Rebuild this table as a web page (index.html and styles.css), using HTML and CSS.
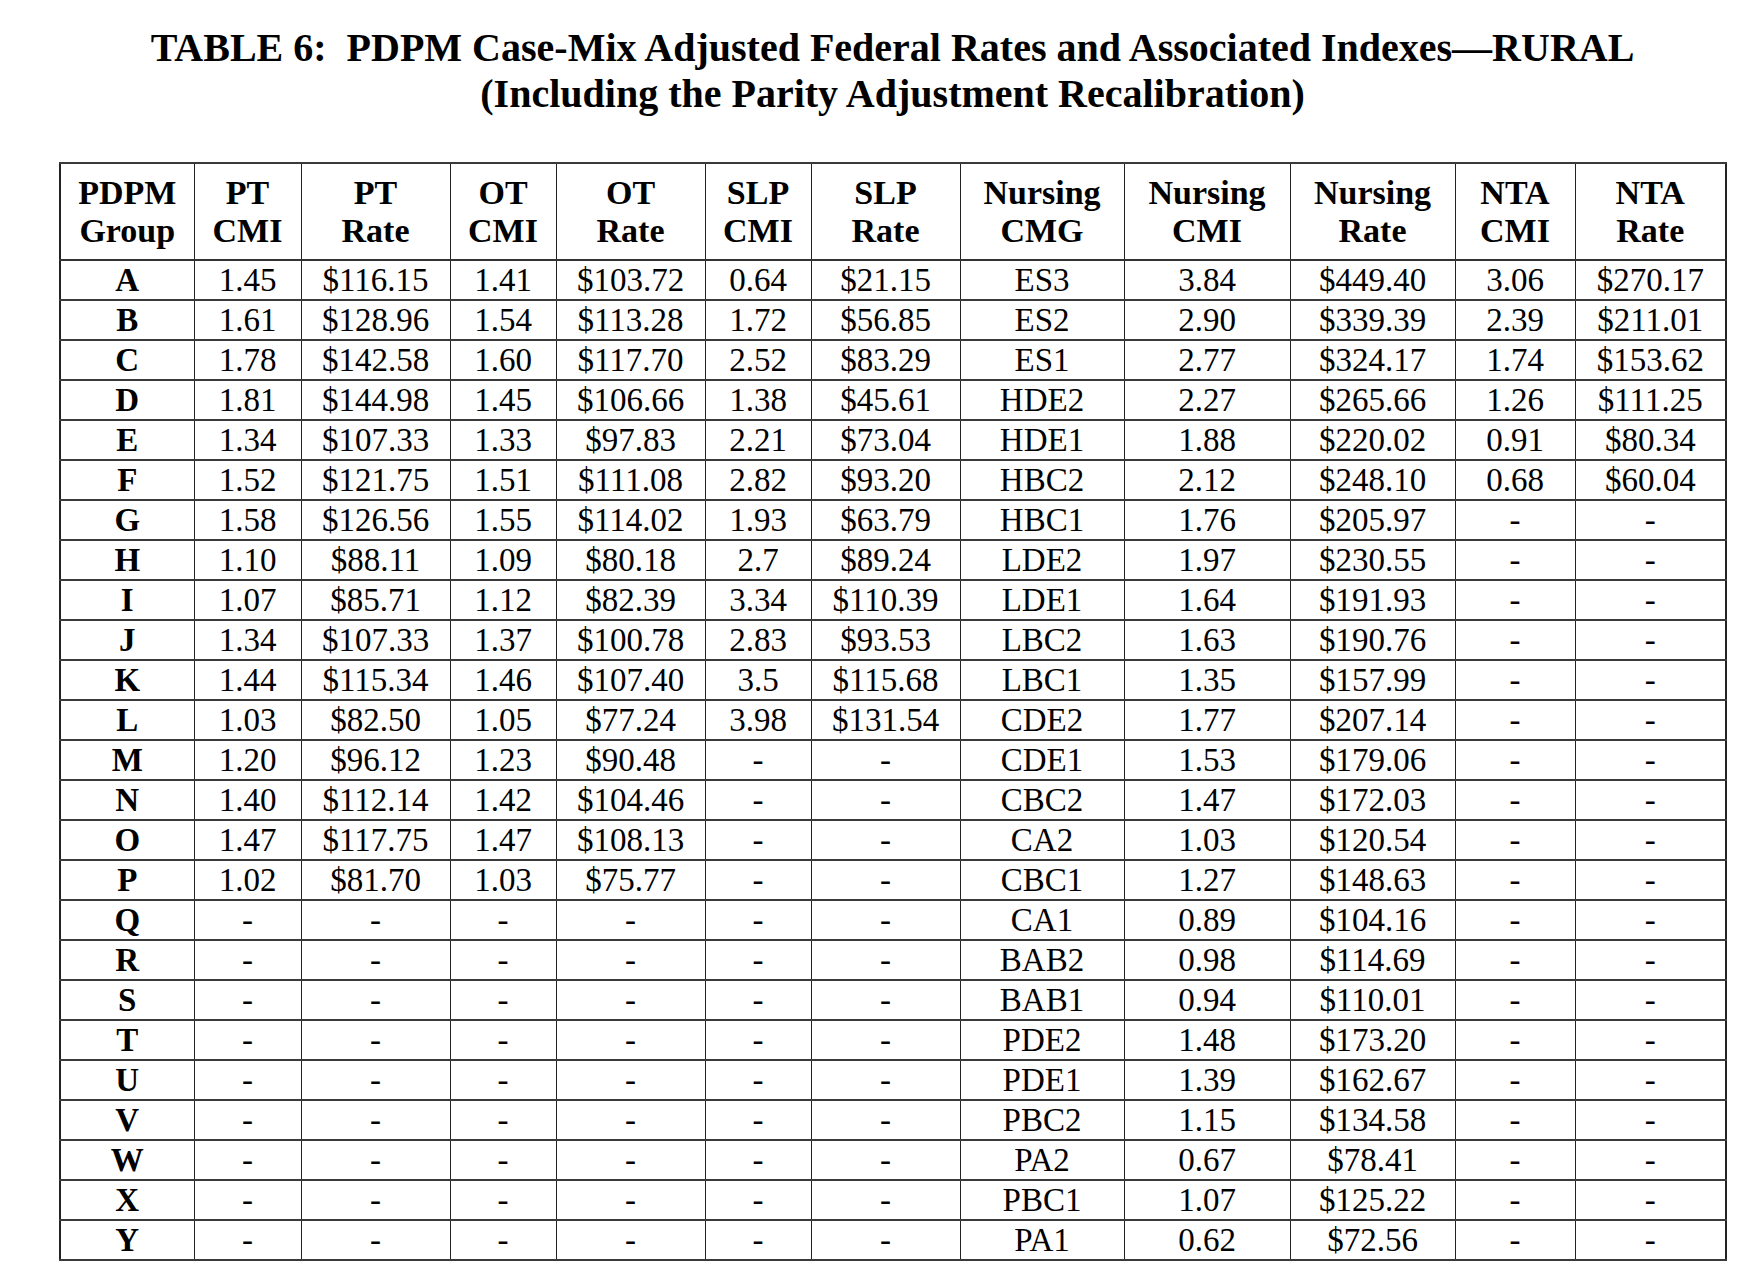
FILE: index.html
```html
<!DOCTYPE html>
<html>
<head>
<meta charset="utf-8">
<link rel="stylesheet" href="styles.css">
</head>
<body>
<div class="page">
<h1 class="title">TABLE 6:&nbsp; PDPM Case-Mix Adjusted Federal Rates and Associated Indexes—RURAL<br>(Including the Parity Adjustment Recalibration)</h1>
<table class="rates">
<colgroup>
<col class="w134"><col class="w107"><col class="w149"><col class="w106"><col class="w149"><col class="w106"><col class="w149"><col class="w164"><col class="w166"><col class="w165"><col class="w120"><col class="w151">
</colgroup>
<thead>
<tr><th>PDPM<br>Group</th><th>PT<br>CMI</th><th>PT<br>Rate</th><th>OT<br>CMI</th><th>OT<br>Rate</th><th>SLP<br>CMI</th><th>SLP<br>Rate</th><th>Nursing<br>CMG</th><th>Nursing<br>CMI</th><th>Nursing<br>Rate</th><th>NTA<br>CMI</th><th>NTA<br>Rate</th></tr>
</thead>
<tbody>
<tr><th>A</th><td>1.45</td><td>$116.15</td><td>1.41</td><td>$103.72</td><td>0.64</td><td>$21.15</td><td>ES3</td><td>3.84</td><td>$449.40</td><td>3.06</td><td>$270.17</td></tr>
<tr><th>B</th><td>1.61</td><td>$128.96</td><td>1.54</td><td>$113.28</td><td>1.72</td><td>$56.85</td><td>ES2</td><td>2.90</td><td>$339.39</td><td>2.39</td><td>$211.01</td></tr>
<tr><th>C</th><td>1.78</td><td>$142.58</td><td>1.60</td><td>$117.70</td><td>2.52</td><td>$83.29</td><td>ES1</td><td>2.77</td><td>$324.17</td><td>1.74</td><td>$153.62</td></tr>
<tr><th>D</th><td>1.81</td><td>$144.98</td><td>1.45</td><td>$106.66</td><td>1.38</td><td>$45.61</td><td>HDE2</td><td>2.27</td><td>$265.66</td><td>1.26</td><td>$111.25</td></tr>
<tr><th>E</th><td>1.34</td><td>$107.33</td><td>1.33</td><td>$97.83</td><td>2.21</td><td>$73.04</td><td>HDE1</td><td>1.88</td><td>$220.02</td><td>0.91</td><td>$80.34</td></tr>
<tr><th>F</th><td>1.52</td><td>$121.75</td><td>1.51</td><td>$111.08</td><td>2.82</td><td>$93.20</td><td>HBC2</td><td>2.12</td><td>$248.10</td><td>0.68</td><td>$60.04</td></tr>
<tr><th>G</th><td>1.58</td><td>$126.56</td><td>1.55</td><td>$114.02</td><td>1.93</td><td>$63.79</td><td>HBC1</td><td>1.76</td><td>$205.97</td><td>-</td><td>-</td></tr>
<tr><th>H</th><td>1.10</td><td>$88.11</td><td>1.09</td><td>$80.18</td><td>2.7</td><td>$89.24</td><td>LDE2</td><td>1.97</td><td>$230.55</td><td>-</td><td>-</td></tr>
<tr><th>I</th><td>1.07</td><td>$85.71</td><td>1.12</td><td>$82.39</td><td>3.34</td><td>$110.39</td><td>LDE1</td><td>1.64</td><td>$191.93</td><td>-</td><td>-</td></tr>
<tr><th>J</th><td>1.34</td><td>$107.33</td><td>1.37</td><td>$100.78</td><td>2.83</td><td>$93.53</td><td>LBC2</td><td>1.63</td><td>$190.76</td><td>-</td><td>-</td></tr>
<tr><th>K</th><td>1.44</td><td>$115.34</td><td>1.46</td><td>$107.40</td><td>3.5</td><td>$115.68</td><td>LBC1</td><td>1.35</td><td>$157.99</td><td>-</td><td>-</td></tr>
<tr><th>L</th><td>1.03</td><td>$82.50</td><td>1.05</td><td>$77.24</td><td>3.98</td><td>$131.54</td><td>CDE2</td><td>1.77</td><td>$207.14</td><td>-</td><td>-</td></tr>
<tr><th>M</th><td>1.20</td><td>$96.12</td><td>1.23</td><td>$90.48</td><td>-</td><td>-</td><td>CDE1</td><td>1.53</td><td>$179.06</td><td>-</td><td>-</td></tr>
<tr><th>N</th><td>1.40</td><td>$112.14</td><td>1.42</td><td>$104.46</td><td>-</td><td>-</td><td>CBC2</td><td>1.47</td><td>$172.03</td><td>-</td><td>-</td></tr>
<tr><th>O</th><td>1.47</td><td>$117.75</td><td>1.47</td><td>$108.13</td><td>-</td><td>-</td><td>CA2</td><td>1.03</td><td>$120.54</td><td>-</td><td>-</td></tr>
<tr><th>P</th><td>1.02</td><td>$81.70</td><td>1.03</td><td>$75.77</td><td>-</td><td>-</td><td>CBC1</td><td>1.27</td><td>$148.63</td><td>-</td><td>-</td></tr>
<tr><th>Q</th><td>-</td><td>-</td><td>-</td><td>-</td><td>-</td><td>-</td><td>CA1</td><td>0.89</td><td>$104.16</td><td>-</td><td>-</td></tr>
<tr><th>R</th><td>-</td><td>-</td><td>-</td><td>-</td><td>-</td><td>-</td><td>BAB2</td><td>0.98</td><td>$114.69</td><td>-</td><td>-</td></tr>
<tr><th>S</th><td>-</td><td>-</td><td>-</td><td>-</td><td>-</td><td>-</td><td>BAB1</td><td>0.94</td><td>$110.01</td><td>-</td><td>-</td></tr>
<tr><th>T</th><td>-</td><td>-</td><td>-</td><td>-</td><td>-</td><td>-</td><td>PDE2</td><td>1.48</td><td>$173.20</td><td>-</td><td>-</td></tr>
<tr><th>U</th><td>-</td><td>-</td><td>-</td><td>-</td><td>-</td><td>-</td><td>PDE1</td><td>1.39</td><td>$162.67</td><td>-</td><td>-</td></tr>
<tr><th>V</th><td>-</td><td>-</td><td>-</td><td>-</td><td>-</td><td>-</td><td>PBC2</td><td>1.15</td><td>$134.58</td><td>-</td><td>-</td></tr>
<tr><th>W</th><td>-</td><td>-</td><td>-</td><td>-</td><td>-</td><td>-</td><td>PA2</td><td>0.67</td><td>$78.41</td><td>-</td><td>-</td></tr>
<tr><th>X</th><td>-</td><td>-</td><td>-</td><td>-</td><td>-</td><td>-</td><td>PBC1</td><td>1.07</td><td>$125.22</td><td>-</td><td>-</td></tr>
<tr><th>Y</th><td>-</td><td>-</td><td>-</td><td>-</td><td>-</td><td>-</td><td>PA1</td><td>0.62</td><td>$72.56</td><td>-</td><td>-</td></tr>
</tbody>
</table>
</div>
</body>
</html>
```
FILE: styles.css
```css
html, body {
  margin: 0;
  padding: 0;
  background: #ffffff;
}
body {
  font-family: "Liberation Serif", "Times New Roman", serif;
  color: #000;
}
.page {
  width: 1667px;
  margin-left: 59px;
  padding-top: 25px;
}
.title {
  margin: 0 0 45px 0;
  font-size: 40px;
  line-height: 46px;
  font-weight: bold;
  text-align: center;
}
.rates {
  border-collapse: collapse;
  table-layout: fixed;
  width: 1667px;
  border: 2px solid #222;
}
.w134 { width: 134px; }
.w107 { width: 107px; }
.w149 { width: 149px; }
.w106 { width: 106px; }
.w164 { width: 164px; }
.w166 { width: 166px; }
.w165 { width: 165px; }
.w120 { width: 120px; }
.w151 { width: 151px; }
.rates th, .rates td {
  padding: 0;
  text-align: center;
  vertical-align: middle;
  border-left: 1px solid #222;
  border-right: 1px solid #222;
  border-top: 2px solid #3a3a3a;
  border-bottom: 2px solid #3a3a3a;
  white-space: nowrap;
}
.rates thead th {
  height: 95px;
  font-size: 34px;
  line-height: 37.7px;
  font-weight: bold;
  border-bottom: 2px solid #333;
}
.rates tbody tr {
  height: 40px;
}
.rates tbody th {
  font-weight: bold;
}
.rates tbody th, .rates tbody td {
  height: 38px;
  font-size: 33px;
  line-height: 38px;
}
```
